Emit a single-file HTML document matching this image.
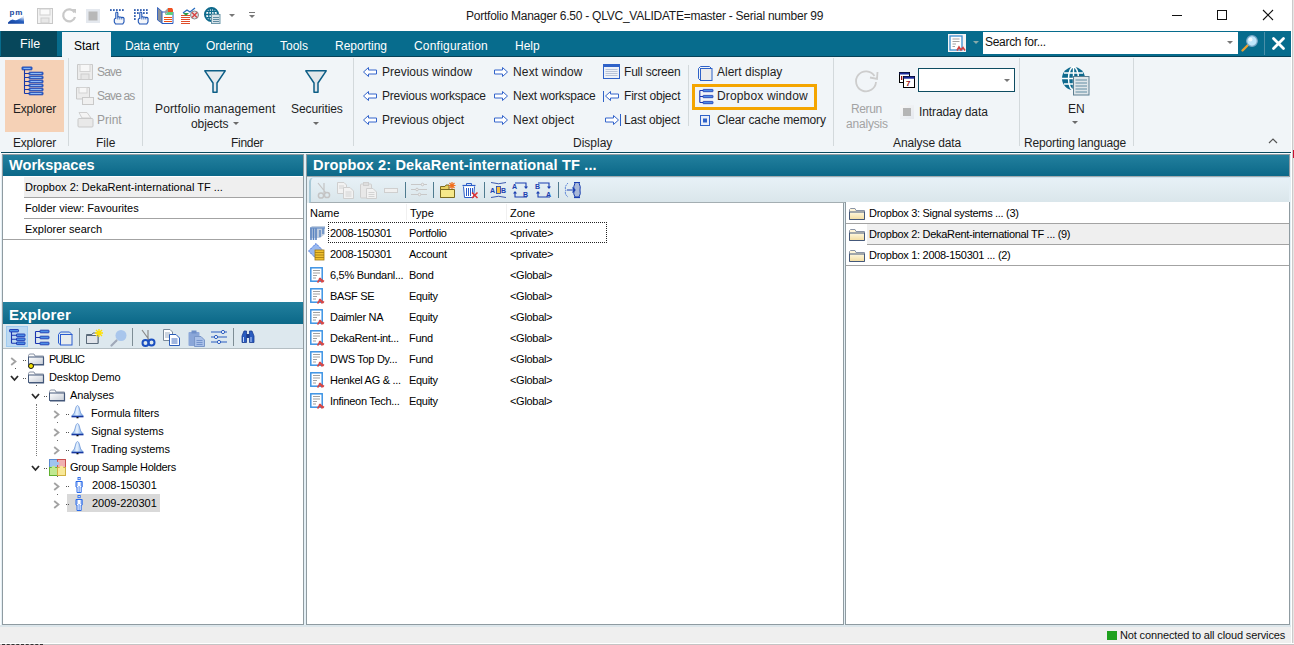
<!DOCTYPE html>
<html><head><meta charset="utf-8">
<style>
*{box-sizing:border-box;margin:0;padding:0}
html,body{width:1294px;height:645px;overflow:hidden;background:#fff;font-family:"Liberation Sans",sans-serif;position:relative}
.a{position:absolute}
svg{position:absolute;overflow:visible}
.t{position:absolute;white-space:nowrap;font-size:12px;color:#1e1e1e;line-height:12px}
.w{color:#fff}
.g{color:#9a9a9a}
.sep{position:absolute;width:1px;background:#d3d9dc}
.hdr{position:absolute;height:21px;background:linear-gradient(#23809e,#0b6888);}
.ht{position:absolute;white-space:nowrap;font-weight:bold;font-size:14.6px;line-height:15px;color:#fff}
.lt{position:absolute;white-space:nowrap;font-size:11px;color:#000;line-height:11px}
.arr{position:absolute;width:0;height:0;border-left:3px solid transparent;border-right:3px solid transparent;border-top:3px solid #6b6b6b}
</style></head><body>
<!-- ===== Title bar ===== -->
<div class="t" style="left:466px;top:10px;letter-spacing:-0.24px;color:#1a1a1a">Portfolio Manager 6.50 - QLVC_VALIDATE=master - Serial number 99</div>
<!-- quick access icons -->
<svg style="left:8px;top:8px" width="17" height="16" viewBox="0 0 17 16">
 <defs><linearGradient id="pmg" x1="0" y1="1" x2="0.6" y2="0"><stop offset="0" stop-color="#0e3c9a"/><stop offset="0.6" stop-color="#2a62c0"/><stop offset="1" stop-color="#dfe8f8"/></linearGradient></defs>
 <text x="1.5" y="6.8" font-family="Liberation Sans" font-weight="bold" font-size="8" letter-spacing="0.8" fill="#1a4aa0">pm</text>
 <path d="M0 15.8 V14.5 Q2 12 4.5 11.5 Q7 12.5 9 12 Q12 11 16 7.5 V15.8 Z" fill="url(#pmg)"/>
</svg>
<svg style="left:37px;top:8px" width="16" height="16" viewBox="0 0 16 16">
 <rect x="0.5" y="0.5" width="15" height="15" fill="#f2f2f2" stroke="#c8c8c8"/>
 <rect x="3" y="1" width="10" height="6" fill="#fafafa" stroke="#d0d0d0"/>
 <rect x="4" y="10" width="8" height="5" fill="#e8e8e8" stroke="#cfcfcf"/>
</svg>
<svg style="left:62px;top:8px" width="15" height="15" viewBox="0 0 15 15">
 <path d="M12.5 4.5 A6 6 0 1 0 13 9" fill="none" stroke="#c9c9c9" stroke-width="2.2"/>
 <path d="M9.5 1 L14 1 L14 5.5 Z" fill="#c9c9c9"/>
</svg>
<svg style="left:86px;top:9px" width="14" height="14" viewBox="0 0 14 14">
 <rect x="0" y="0" width="14" height="14" fill="#e4e8ee"/>
 <rect x="2.5" y="2.5" width="9" height="9" fill="#b8b8b8"/>
</svg>
<svg style="left:110px;top:8px" width="16" height="17" viewBox="0 0 16 17">
 <g fill="#1d4fa8"><rect x="0" y="1.2" width="1.7" height="1.7"/><rect x="3" y="1.2" width="1.7" height="1.7"/><rect x="6" y="1.2" width="1.7" height="1.7"/><rect x="9" y="1.2" width="1.7" height="1.7"/><rect x="12" y="1.2" width="1.7" height="1.7"/></g>
 <path d="M5.5 16 L4.3 14 V11.5 Q4.3 10.5 5.3 10.5 H5.8 V5 Q5.8 4 6.8 4 Q7.8 4 7.8 5 V9 Q9 8.3 9.8 9.2 Q11 8.6 11.8 9.6 Q13.3 9 14 10.3 V14 L12.8 16 Z" fill="#f4f6fa" stroke="#1f55b5" stroke-width="1.1" stroke-linejoin="round"/>
 <path d="M7.8 9 V11.5 M9.8 9.2 V11.5 M11.8 9.6 V11.5" stroke="#1f55b5" stroke-width="0.8"/>
</svg>
<svg style="left:134px;top:8px" width="16" height="17" viewBox="0 0 16 17">
 <g fill="#1d4fa8"><rect x="0" y="1.2" width="1.7" height="1.7"/><rect x="3" y="1.2" width="1.7" height="1.7"/><rect x="6" y="1.2" width="1.7" height="1.7"/><rect x="9" y="1.2" width="1.7" height="1.7"/><rect x="12" y="1.2" width="1.7" height="1.7"/>
 <rect x="0" y="4.2" width="1.7" height="1.7"/><rect x="3" y="4.2" width="1.7" height="1.7"/><rect x="9" y="4.2" width="1.7" height="1.7"/><rect x="12" y="4.2" width="1.7" height="1.7"/><rect x="0" y="7.2" width="1.7" height="1.7"/><rect x="0" y="10.2" width="1.7" height="1.7"/></g>
 <path d="M5.5 16 L4.3 14 V11.5 Q4.3 10.5 5.3 10.5 H5.8 V5 Q5.8 4 6.8 4 Q7.8 4 7.8 5 V9 Q9 8.3 9.8 9.2 Q11 8.6 11.8 9.6 Q13.3 9 14 10.3 V14 L12.8 16 Z" fill="#f4f6fa" stroke="#1f55b5" stroke-width="1.1" stroke-linejoin="round"/>
 <path d="M7.8 9 V11.5 M9.8 9.2 V11.5 M11.8 9.6 V11.5" stroke="#1f55b5" stroke-width="0.8"/>
</svg>
<svg style="left:157px;top:7px" width="17" height="17" viewBox="0 0 17 17">
 <path d="M0.5 0.5 L5.5 5 V16.5 L0.5 13 Z" fill="#8a9098" stroke="#2a5cc0" stroke-width="0.9"/>
 <path d="M5 5 H16 V16.5 H5 Z" fill="#fff" stroke="#2a5cc0" stroke-width="1"/>
 <path d="M11 5 L8 7.5 V4 L11 1 Z" fill="#9aa0a0"/>
 <path d="M11 1 H15 L16 2.5 V5 H11 Z" fill="#f05020"/>
 <path d="M8 8 L11 5 H16 V8 Z" fill="#60d080"/>
 <path d="M7 10.5 H15 M7 12.5 H15 M7 14.5 H15" stroke="#ee5010" stroke-width="1"/>
</svg>
<svg style="left:181px;top:7px" width="18" height="17" viewBox="0 0 18 17">
 <path d="M2 6 L6 3 L9 5 L14 1" fill="none" stroke="#2a6fc0" stroke-width="1.3"/>
 <path d="M0 8.5 H9 M0 10.5 H9 M0 12.5 H9 M0 14.5 H9 M0 16.5 H9" stroke="#e04d2a" stroke-width="1"/>
 <path d="M2 6 L5 9 L8 6" fill="#2f9e48"/>
 <circle cx="13.5" cy="8" r="4" fill="#e0e0e0" stroke="#888"/>
 <path d="M11 5.5 L16 10.5 M16 5.5 L11 10.5" stroke="#d84040" stroke-width="1.3"/>
</svg>
<svg style="left:204px;top:7px" width="17" height="17" viewBox="0 0 17 17">
 <circle cx="7.5" cy="7.5" r="6.5" fill="none" stroke="#0f6a8c" stroke-width="2"/>
 <path d="M1 7.5 H14 M7.5 1 V14 M2.5 4.3 H12.5 M2.5 10.7 H12.5" stroke="#0f6a8c" stroke-width="1.3"/>
 <ellipse cx="7.5" cy="7.5" rx="2.8" ry="6.5" fill="none" stroke="#0f6a8c" stroke-width="1.3"/>
 <rect x="7.5" y="7.5" width="8.5" height="9" fill="#d6e2e8" stroke="#6d97aa"/>
 <path d="M9 10.5 H15 M9 12.5 H15 M9 14.5 H15" stroke="#5e8aa0" stroke-width="1"/>
</svg>
<div class="arr" style="left:229px;top:14px;border-top-color:#777"></div>
<div class="a" style="left:249px;top:12px;width:6px;height:1px;background:#777"></div>
<div class="arr" style="left:249px;top:15px;border-top-color:#777"></div>
<!-- window controls -->
<div class="a" style="left:1172px;top:15px;width:10px;height:1px;background:#111"></div>
<div class="a" style="left:1217px;top:10px;width:10px;height:10px;border:1px solid #111"></div>
<svg style="left:1263px;top:10px" width="10" height="10" viewBox="0 0 10 10"><path d="M0 0 L10 10 M10 0 L0 10" stroke="#111" stroke-width="1.1"/></svg>
<div class="a" style="left:1292px;top:0;width:1px;height:645px;background:#cbcbcb"></div>
<div class="a" style="left:1293px;top:0;width:1px;height:645px;background:#e6e6e6"></div>
<div class="a" style="left:1293px;top:150px;width:1px;height:8px;background:#c8102e"></div>

<!-- ===== Menu bar ===== -->
<div class="a" style="left:0;top:31px;width:1291px;height:26px;background:#076c8d;border-bottom:1px solid #064258"></div>
<div class="a" style="left:1px;top:31px;width:56px;height:26px;background:#07475b"></div>
<div class="a" style="left:62px;top:32px;width:49px;height:25px;background:#f1f5f8"></div>
<div class="t w" style="left:20px;top:38px;font-size:12.5px">File</div>
<div class="t" style="left:74px;top:40px;font-size:12px;color:#000">Start</div>
<div class="t w" style="left:125px;top:40px;letter-spacing:-0.15px">Data entry</div>
<div class="t w" style="left:206px;top:40px">Ordering</div>
<div class="t w" style="left:280px;top:40px">Tools</div>
<div class="t w" style="left:335px;top:40px">Reporting</div>
<div class="t w" style="left:414px;top:40px;letter-spacing:0.2px">Configuration</div>
<div class="t w" style="left:515px;top:40px">Help</div>
<!-- search -->
<svg style="left:948px;top:34px" width="18" height="18" viewBox="0 0 18 18">
 <rect x="0" y="0" width="18" height="18" fill="#f4f4f4"/>
 <rect x="2" y="2" width="12" height="14" fill="#fff" stroke="#3d8fd0" stroke-width="1.3"/>
 <path d="M4.5 5 H11.5 M4.5 7.5 H11.5 M4.5 10 H8 M4.5 12.5 H7" stroke="#999" stroke-width="0.9"/>
 <path d="M9 16.5 L11 13 L13 16 L15 13.5 L17 16.5" fill="none" stroke="#d04040" stroke-width="1.6"/>
</svg>
<div class="arr" style="left:973px;top:41px;border-top-color:#8aa"></div>
<div class="a" style="left:983px;top:32px;width:255px;height:22px;background:#fff"></div>
<div class="t" style="left:985px;top:36px;letter-spacing:-0.3px;color:#111">Search for...</div>
<div class="arr" style="left:1227px;top:41px;border-top-color:#777"></div>
<svg style="left:1241px;top:34px" width="18" height="18" viewBox="0 0 18 18">
 <path d="M1.5 16.5 L7 11" stroke="#e8a030" stroke-width="2.4" stroke-linecap="round"/>
 <circle cx="11" cy="7" r="5.3" fill="#bfe6fb" stroke="#7aa8c8" stroke-width="1.2"/>
 <circle cx="9.5" cy="5.5" r="2" fill="#fff" opacity="0.8"/>
</svg>
<div class="a" style="left:1264px;top:32px;width:1px;height:23px;background:#4a8fa8"></div>
<svg style="left:1272px;top:37px" width="13" height="13" viewBox="0 0 13 13"><path d="M1.5 1.5 L11.5 11.5 M11.5 1.5 L1.5 11.5" stroke="#fff" stroke-width="2.8" stroke-linecap="round"/></svg>
<!-- ===== Ribbon ===== -->
<div class="a" style="left:0;top:57px;width:1291px;height:95px;background:#f1f5f8"></div>
<div class="a" style="left:1px;top:152px;width:1290px;height:1px;background:#0a4a5e"></div>
<!-- Explorer group -->
<div class="a" style="left:5px;top:60px;width:59px;height:72px;background:#f5d1b6"></div>
<svg style="left:21px;top:66px" width="24" height="30" viewBox="0 0 24 30">
 <path d="M3.5 3 V27.5 M3.5 7.5 H8 M3.5 11.5 H8 M3.5 15.5 H8 M3.5 19.5 H8 M3.5 23.5 H8 M3.5 27.5 H8" stroke="#1838a8" stroke-width="1.1" fill="none"/>
 <g fill="#2f6fd8" stroke="#1a3fb0" stroke-width="0.9">
 <rect x="1" y="1" width="10" height="2.8" rx="0.5"/>
 <rect x="8" y="6.2" width="14" height="2.6" rx="0.5"/>
 <rect x="8" y="10.2" width="14" height="2.6" rx="0.5"/>
 <rect x="8" y="14.2" width="14" height="2.6" rx="0.5"/>
 <rect x="8" y="18.2" width="14" height="2.6" rx="0.5"/>
 <rect x="8" y="22.2" width="14" height="2.6" rx="0.5"/>
 <rect x="8" y="26.2" width="14" height="2.6" rx="0.5"/>
 </g>
 <path d="M2.5 2.4 H9.5 M9.5 7.5 H20.5 M9.5 11.5 H20.5 M9.5 15.5 H20.5 M9.5 19.5 H20.5 M9.5 23.5 H20.5 M9.5 27.5 H20.5" stroke="#a8d0ff" stroke-width="0.8"/>
</svg>
<div class="t" style="left:13px;top:103px;letter-spacing:-0.2px">Explorer</div>
<div class="t" style="left:13px;top:137px;letter-spacing:-0.2px">Explorer</div>
<div class="sep" style="left:68px;top:58px;height:88px"></div>
<!-- File group -->
<svg style="left:77px;top:64px" width="16" height="16" viewBox="0 0 16 16">
 <path d="M0.5 0.5 H15.5 V15.5 H0.5 Z" fill="#ececec" stroke="#c9c9c9"/>
 <rect x="3" y="0.5" width="10" height="7" fill="#f7f7f7" stroke="#d3d3d3"/>
 <rect x="4" y="10" width="8" height="5.5" fill="#e6e6e6" stroke="#cdcdcd"/>
</svg>
<div class="t g" style="left:97px;top:66px;letter-spacing:-0.8px">Save</div>
<svg style="left:76px;top:87px" width="18" height="18" viewBox="0 0 18 18">
 <path d="M0.5 0.5 H13.5 V12 H0.5 Z" fill="#ececec" stroke="#c9c9c9"/>
 <rect x="3" y="0.5" width="8" height="5.5" fill="#f7f7f7" stroke="#d3d3d3"/>
 <rect x="6.5" y="10.5" width="11" height="7" fill="#f0f0f0" stroke="#c9c9c9"/>
</svg>
<div class="t g" style="left:97px;top:90px;letter-spacing:-0.85px">Save as</div>
<svg style="left:77px;top:112px" width="17" height="16" viewBox="0 0 17 16">
 <path d="M2 0.5 L10 0.5 L14 6 H5 Z" fill="#f4f4f4" stroke="#cfcfcf"/>
 <rect x="1" y="6.5" width="15" height="8.5" rx="1" fill="#e9e9e9" stroke="#c9c9c9"/>
</svg>
<div class="t g" style="left:97px;top:114px">Print</div>
<div class="t" style="left:96px;top:137px">File</div>
<div class="sep" style="left:142px;top:58px;height:88px"></div>
<!-- Finder group -->
<svg style="left:204px;top:70px" width="22" height="23" viewBox="0 0 22 23">
 <path d="M0.8 0.8 H21.2 L13 13 V22.2 H9 V13 Z" fill="#e6eaee" stroke="#0d5e86" stroke-width="1.5" stroke-linejoin="round"/>
</svg>
<svg style="left:305px;top:70px" width="22" height="23" viewBox="0 0 22 23">
 <path d="M0.8 0.8 H21.2 L13 13 V22.2 H9 V13 Z" fill="#e2e6ea" stroke="#0d5e86" stroke-width="1.5" stroke-linejoin="round"/>
</svg>
<div class="t" style="left:155px;top:103px;letter-spacing:0.15px">Portfolio management</div>
<div class="t" style="left:191px;top:118px;letter-spacing:-0.1px">objects</div>
<div class="arr" style="left:233px;top:122px"></div>
<div class="t" style="left:291px;top:103px;letter-spacing:-0.1px">Securities</div>
<div class="arr" style="left:313px;top:122px"></div>
<div class="t" style="left:231px;top:137px;letter-spacing:-0.3px">Finder</div>
<div class="sep" style="left:353px;top:58px;height:88px"></div>
<!-- Display group -->
<svg style="left:0;top:0" width="1" height="1">
 <defs>
  <path id="la" d="M0.5 5 L5.5 0.5 V3 H13.5 V7 H5.5 V9.5 Z" fill="#fff" stroke="#3465cc" stroke-width="1"/>
  <path id="ra" d="M13.5 5 L8.5 0.5 V3 H0.5 V7 H8.5 V9.5 Z" fill="#fff" stroke="#3465cc" stroke-width="1"/>
 </defs>
</svg>
<svg style="left:363px;top:67px" width="14" height="10"><use href="#la"/></svg>
<svg style="left:363px;top:91px" width="14" height="10"><use href="#la"/></svg>
<svg style="left:363px;top:115px" width="14" height="10"><use href="#la"/></svg>
<div class="t" style="left:382px;top:66px">Previous window</div>
<div class="t" style="left:382px;top:90px;letter-spacing:-0.2px">Previous workspace</div>
<div class="t" style="left:382px;top:114px">Previous object</div>
<svg style="left:494px;top:67px" width="14" height="10"><use href="#ra"/></svg>
<svg style="left:494px;top:91px" width="14" height="10"><use href="#ra"/></svg>
<svg style="left:494px;top:115px" width="14" height="10"><use href="#ra"/></svg>
<div class="t" style="left:513px;top:66px;letter-spacing:0.15px">Next window</div>
<div class="t" style="left:513px;top:90px;letter-spacing:-0.2px">Next workspace</div>
<div class="t" style="left:513px;top:114px;letter-spacing:0.1px">Next object</div>
<svg style="left:603px;top:64px" width="17" height="15" viewBox="0 0 17 15">
 <rect x="0.5" y="0.5" width="16" height="14" fill="#eef2f8" stroke="#2f62c8"/>
 <rect x="0.5" y="0.5" width="16" height="2.5" fill="#2f62c8"/>
 <path d="M2.5 5.5 H14.5 M2.5 7.5 H14.5 M2.5 9.5 H14.5 M2.5 11.5 H14.5" stroke="#b9c4d8" stroke-width="1"/>
</svg>
<svg style="left:603px;top:91px" width="16" height="11" viewBox="0 0 16 11">
 <path d="M0.5 0 V11" stroke="#2f62c8" stroke-width="1"/>
 <path d="M2.5 5 L7.5 0.5 V3 H15.5 V7 H7.5 V9.5 Z" fill="#fff" stroke="#3465cc" stroke-width="1"/>
</svg>
<svg style="left:605px;top:114px" width="16" height="12" viewBox="0 0 16 12">
 <path d="M15.5 0 V12" stroke="#2f62c8" stroke-width="1"/>
 <path d="M13.5 6 L8.5 1.5 V4 H0.5 V8 H8.5 V10.5 Z" fill="#fff" stroke="#3465cc" stroke-width="1"/>
</svg>
<div class="t" style="left:624px;top:66px;letter-spacing:-0.2px">Full screen</div>
<div class="t" style="left:624px;top:90px;letter-spacing:-0.2px">First object</div>
<div class="t" style="left:624px;top:114px;letter-spacing:-0.2px">Last object</div>
<div class="sep" style="left:688px;top:65px;height:61px"></div>
<svg style="left:698px;top:66px" width="15" height="15" viewBox="0 0 15 15">
 <path d="M0.5 2.5 L2.5 0.5 H11.5 L13.5 2.5" fill="none" stroke="#2f62c8"/>
 <rect x="2.5" y="2.5" width="11.5" height="12" fill="#ececec" stroke="#2f62c8"/>
 <path d="M0.5 2.5 V12.5 L2.5 14.5" fill="none" stroke="#2f62c8"/>
</svg>
<div class="a" style="left:692px;top:84px;width:125px;height:26px;border:3px solid #f4a500"></div>
<svg style="left:699px;top:89px" width="15" height="16" viewBox="0 0 15 16">
 <path d="M0.8 1.5 V13.5 M0.8 1.5 H4 M0.8 7.5 H4 M0.8 13.5 H4" stroke="#1a35b0" stroke-width="1.1" fill="none"/>
 <g fill="#4d8ee6" stroke="#1a35b0" stroke-width="0.8"><rect x="4" y="0.4" width="10" height="2.3" rx="0.5"/><rect x="4" y="6.4" width="10" height="2.3" rx="0.5"/><rect x="4" y="12.4" width="10" height="2.3" rx="0.5"/></g>
</svg>
<svg style="left:700px;top:115px" width="10" height="11" viewBox="0 0 10 11">
 <rect x="0.5" y="0.5" width="9" height="10" fill="#e9eef8" stroke="#2f62c8"/>
 <rect x="3" y="3.5" width="4" height="4" fill="#2f62c8"/>
</svg>
<div class="t" style="left:717px;top:66px;letter-spacing:0px">Alert display</div>
<div class="t" style="left:717px;top:90px;letter-spacing:0.15px">Dropbox window</div>
<div class="t" style="left:717px;top:114px;letter-spacing:-0.1px">Clear cache memory</div>
<div class="t" style="left:573px;top:137px">Display</div>
<div class="sep" style="left:833px;top:58px;height:88px"></div>
<!-- Analyse data -->
<svg style="left:854px;top:69px" width="25" height="24" viewBox="0 0 25 24">
 <path d="M20.5 7 A10 10 0 1 0 22 13" fill="none" stroke="#cdcdcd" stroke-width="1.8"/>
 <path d="M23.5 3 L23 10 L16 8.5" fill="none" stroke="#cdcdcd" stroke-width="1.8"/>
</svg>
<div class="t g" style="left:851px;top:103px;color:#a3a3a3;letter-spacing:-0.4px">Rerun</div>
<div class="t g" style="left:846px;top:118px;color:#a3a3a3;letter-spacing:-0.2px">analysis</div>
<svg style="left:899px;top:72px" width="16" height="16" viewBox="0 0 16 16">
 <rect x="0.5" y="0.5" width="10" height="10" fill="#fff" stroke="#000"/>
 <rect x="0.5" y="0.5" width="10" height="2" fill="#1a2a9a"/>
 <rect x="4.5" y="4.5" width="11" height="11" fill="#fff" stroke="#000"/>
 <rect x="4.5" y="4.5" width="11" height="2.2" fill="#1a2a9a"/>
 <text x="7" y="14" font-family="Liberation Sans" font-weight="bold" font-size="8" fill="#9a1010">7</text>
 <rect x="2" y="4" width="1.3" height="4" fill="#9a1010"/>
</svg>
<div class="a" style="left:918px;top:68px;width:97px;height:24px;border:1.5px solid #0e4d62;background:#fff"></div>
<div class="arr" style="left:1004px;top:79px;border-top-color:#777"></div>
<div class="a" style="left:900px;top:105px;width:14px;height:14px;background:linear-gradient(135deg,#f8f8f8,#e4e8ee)"></div>
<div class="a" style="left:903px;top:108px;width:8px;height:8px;background:#b5b5b5"></div>
<div class="t" style="left:919px;top:106px;letter-spacing:-0.1px">Intraday data</div>
<div class="t" style="left:893px;top:137px;letter-spacing:-0.1px">Analyse data</div>
<div class="sep" style="left:1019px;top:58px;height:88px"></div>
<!-- Reporting language -->
<svg style="left:1061px;top:66px" width="29" height="30" viewBox="0 0 29 30">
 <circle cx="12.5" cy="12.5" r="11.5" fill="#0f6a8e"/>
 <g stroke="#fff" stroke-width="1.4" fill="none">
 <path d="M1 12.5 H24 M12.5 1 V24 M3 7 H22 M3 18 H22"/>
 <ellipse cx="12.5" cy="12.5" rx="5" ry="11.5"/>
 </g>
 <rect x="12.5" y="10.5" width="15.5" height="18.5" fill="#dfe6ea" stroke="#5d7f91" stroke-width="1"/>
 <path d="M14.5 14 H26 M14.5 17 H26 M14.5 20 H26 M14.5 23 H26 M14.5 26 H26" stroke="#8aaabb" stroke-width="1.4"/>
</svg>
<div class="t" style="left:1068px;top:103px">EN</div>
<div class="arr" style="left:1072px;top:121px"></div>
<div class="t" style="left:1024px;top:137px;letter-spacing:-0.15px">Reporting language</div>
<div class="sep" style="left:1133px;top:58px;height:88px"></div>
<svg style="left:1268px;top:138px" width="10" height="6" viewBox="0 0 10 6"><path d="M1 5 L5 1 L9 5" fill="none" stroke="#555" stroke-width="1.2"/></svg>
<!-- ===== Main area ===== -->
<div class="a" style="left:0;top:153px;width:1291px;height:472px;background:#e4eff5"></div>
<div class="a" style="left:0;top:153px;width:1px;height:474px;background:#fafcfd"></div><div class="a" style="left:1px;top:154px;width:1px;height:473px;background:#e3eef4"></div>
<div class="a" style="left:0;top:153px;width:1291px;height:1px;background:#fafcfd"></div>
<!-- Workspaces panel -->
<div class="a" style="left:2px;top:154px;width:302px;height:149px;background:#fff;border:1px solid #8f9ba1"></div>
<div class="hdr" style="left:3px;top:155px;width:300px"></div>
<div class="ht" style="left:9px;top:158px">Workspaces</div>
<div class="a" style="left:24px;top:177px;width:279px;height:20px;background:#efefef"></div>
<div class="a" style="left:24px;top:197px;width:279px;height:1px;background:#a3a3a3"></div>
<div class="a" style="left:24px;top:218px;width:279px;height:1px;background:#a3a3a3"></div>
<div class="a" style="left:3px;top:239px;width:300px;height:1px;background:#a3a3a3"></div>
<div class="lt" style="left:25px;top:182px">Dropbox 2: DekaRent-international TF ...</div>
<div class="lt" style="left:25px;top:203px">Folder view: Favourites</div>
<div class="lt" style="left:25px;top:224px">Explorer search</div>
<!-- Explorer panel -->
<div class="a" style="left:2px;top:302px;width:302px;height:323px;background:#fff;border:1px solid #8f9ba1"></div>
<div class="hdr" style="left:3px;top:302px;width:300px;height:22px"></div>
<div class="ht" style="left:9px;top:307px;font-size:15px;letter-spacing:0.15px">Explorer</div>
<div class="a" style="left:3px;top:324px;width:300px;height:25px;background:#dde8ee;border-bottom:1px solid #b4bec3"></div>
<div class="a" style="left:6px;top:326px;width:22px;height:21px;background:#bcd9f2;border:1px solid #9fcbf0"></div>
<svg style="left:9px;top:329px" width="17" height="16" viewBox="0 0 17 16">
 <path d="M2.5 2.5 V14.3 M2.5 6.3 H8 M2.5 10.3 H8 M2.5 14.3 H8" stroke="#1a35b0" stroke-width="1.1" fill="none"/>
 <g fill="#4d8ee6" stroke="#1a35b0" stroke-width="0.9"><rect x="0.5" y="0.5" width="9" height="2.4" rx="0.6"/><rect x="7.5" y="5" width="8.5" height="2.6" rx="0.6"/><rect x="7.5" y="9" width="8.5" height="2.6" rx="0.6"/><rect x="7.5" y="13" width="8.5" height="2.6" rx="0.6"/></g>
</svg>
<svg style="left:34px;top:329px" width="17" height="16" viewBox="0 0 17 16">
 <path d="M1.5 2.5 V14.5 M1.5 2.5 H6 M1.5 8.5 H6 M1.5 14.5 H6" stroke="#1a35b0" stroke-width="1.1" fill="none"/>
 <g fill="#4d8ee6" stroke="#1a35b0" stroke-width="0.9"><rect x="6" y="1.2" width="9" height="2.6" rx="0.6"/><rect x="6" y="7.2" width="9" height="2.6" rx="0.6"/><rect x="6" y="13.2" width="9" height="2.6" rx="0.6"/></g>
</svg>
<svg style="left:58px;top:331px" width="15" height="15" viewBox="0 0 15 15">
 <path d="M0.5 3.5 L2.5 1 H11.5 L14 3.5" fill="none" stroke="#2a5cd0" stroke-width="1"/>
 <rect x="2.5" y="3.5" width="11.5" height="10.5" fill="#e8ecee" stroke="#2a5cd0"/>
 <path d="M0.5 3.5 V12 L2.5 14" fill="none" stroke="#2a5cd0"/>
</svg>
<div class="a" style="left:79px;top:328px;width:1px;height:18px;background:#7d8d95"></div>
<svg style="left:86px;top:329px" width="18" height="16" viewBox="0 0 18 16">
 <path d="M0.5 5.5 H6 L7 4 H12 V14.5 H0.5 Z" fill="#f4f4f4" stroke="#5a6a7a"/>
 <path d="M0.5 6.5 H12 V14.5 H0.5 Z" fill="#e0e4ea" stroke="#5a6a7a"/>
 <path d="M13 0 V8 M9 4 H17 M10 1 L16 7 M16 1 L10 7" stroke="#ffe000" stroke-width="1.3"/>
</svg>
<svg style="left:110px;top:329px" width="18" height="18" viewBox="0 0 18 18">
 <path d="M1.5 16.5 L6.5 11.5" stroke="#a0a8b8" stroke-width="2.2" stroke-linecap="round"/>
 <circle cx="11" cy="6.5" r="5.5" fill="#a9c6ec"/>
</svg>
<div class="a" style="left:132px;top:328px;width:1px;height:18px;background:#7d8d95"></div>
<svg style="left:141px;top:329px" width="14" height="18" viewBox="0 0 14 18">
 <path d="M1 1 L9 12 M7 1 L7 12" stroke="#8a8a8a" stroke-width="1.2"/>
 <circle cx="4.5" cy="14" r="3" fill="none" stroke="#1a4fc0" stroke-width="2"/>
 <circle cx="10.5" cy="13.5" r="3" fill="none" stroke="#1a4fc0" stroke-width="2"/>
</svg>
<svg style="left:163px;top:329px" width="17" height="17" viewBox="0 0 17 17">
 <path d="M0.5 0.5 H7 L9.5 3 V11.5 H0.5 Z" fill="#fff" stroke="#7a8a9a"/>
 <path d="M2 4 H7 M2 6 H7 M2 8 H7" stroke="#8fa0b8" stroke-width="0.9"/>
 <path d="M6.5 5.5 H13 L16.5 9 V16.5 H6.5 Z" fill="#fff" stroke="#2a5cb8"/>
 <path d="M8.5 10 H14.5 M8.5 12 H14.5 M8.5 14 H14.5" stroke="#2a5cb8" stroke-width="0.9"/>
</svg>
<svg style="left:188px;top:330px" width="17" height="17" viewBox="0 0 17 17">
 <rect x="0.5" y="2" width="11" height="14" rx="1" fill="#8aa6d8"/>
 <rect x="3.5" y="0.5" width="5" height="3" fill="#6f8fc8"/>
 <path d="M6.5 6.5 H13 L16.5 10 V16.5 H6.5 Z" fill="#a9c0e8" stroke="#7a97c8"/>
 <path d="M8.5 10.5 H14.5 M8.5 12.5 H14.5 M8.5 14.5 H14.5" stroke="#6f8fc8" stroke-width="0.9"/>
</svg>
<svg style="left:211px;top:330px" width="17" height="14" viewBox="0 0 17 14">
 <path d="M0 2 H16 M0 7 H16 M0 12 H16" stroke="#2a5cc0" stroke-width="1.1"/>
 <g fill="#fff" stroke="#2a5cc0"><circle cx="12" cy="2" r="1.6"/><circle cx="5" cy="7" r="1.6"/><circle cx="8" cy="12" r="1.6"/></g>
</svg>
<div class="a" style="left:233px;top:328px;width:1px;height:18px;background:#7d8d95"></div>
<svg style="left:241px;top:330px" width="14" height="13" viewBox="0 0 14 13">
 <path d="M1 12.5 V6 L3 1 H5.5 V12.5 Z M8.5 12.5 V1 H11 L13 6 V12.5 Z" fill="#2a5cc0" stroke="#1a3c90" stroke-width="0.8"/>
 <rect x="5.5" y="4" width="3" height="4" fill="#1a3c90"/>
 <path d="M2.5 7 V12 M10 7 V12" stroke="#cfe0ff" stroke-width="0.9"/>
</svg>
<!-- tree -->
<div class="a" style="left:57px;top:404px;width:1px;height:1px;background:#666"></div>
<div class="a" style="left:57px;top:422px;width:1px;height:1px;background:#666"></div>
<div class="a" style="left:57px;top:440px;width:1px;height:1px;background:#666"></div>
<div class="a" style="left:57px;top:476px;width:1px;height:1px;background:#666"></div>
<div class="a" style="left:57px;top:494px;width:1px;height:1px;background:#666"></div>

<svg style="left:0;top:0" width="1" height="1"><defs>
 <g id="fold"><path d="M0.5 2.5 V11.5 H15.5 V3 H7 L6 1 H1.5 Z" fill="#fbfbfb" stroke="#8a94a6"/><path d="M0.5 4 H15.5 V11.5 H0.5 Z" fill="url(#fg)" stroke="#44587a"/><path d="M1 12 H15.5 V4.5" stroke="#44587a" stroke-width="1.2" fill="none"/></g>
 <linearGradient id="fg" x1="0" y1="0" x2="1" y2="1"><stop offset="0" stop-color="#ffffff"/><stop offset="1" stop-color="#c6ccd6"/></linearGradient>
 <g id="bell"><linearGradient id="bg1" x1="0" y1="0" x2="1" y2="0"><stop offset="0" stop-color="#7eaeea"/><stop offset="0.45" stop-color="#eaf4ff"/><stop offset="1" stop-color="#6f9fe0"/></linearGradient><path d="M6.5 0.5 Q5 0.8 4.5 4 Q4 8.5 0.8 11 H12.2 Q9 8.5 8.5 4 Q8 0.8 6.5 0.5 Z" fill="url(#bg1)" stroke="#6b95d8" stroke-width="0.8"/><path d="M0.5 11.6 H12.5" stroke="#1838a0" stroke-width="1.5"/><rect x="5.5" y="12" width="2" height="1.3" fill="#111"/></g>
 <g id="exp"><path d="M1.2 1 L5.5 4.5 L1.2 8" fill="none" stroke="#a2a2a2" stroke-width="1.8"/></g>
 <g id="col"><path d="M1 1 L4.5 5 L8 1" fill="none" stroke="#2a2a2a" stroke-width="1.8"/></g>
 <g id="man"><rect x="3" y="0.5" width="2.2" height="2.2" fill="#fff" stroke="#2a6ae8" stroke-width="0.9"/><path d="M1 4.5 H7.2 V10 H6.2 V15.5 H2 V10 H1 Z" fill="#fff" stroke="#2a6ae8" stroke-width="1"/><path d="M4.1 9 V15.5 M2 4.5 V9 M6.2 4.5 V9" stroke="#2a6ae8" stroke-width="0.8"/></g>
</defs></svg>
<svg style="left:10px;top:357px" width="8" height="9"><use href="#exp"/></svg>
<div class="a" style="left:23px;top:360px;width:1px;height:1px;background:#555"></div><div class="a" style="left:25px;top:360px;width:1px;height:1px;background:#555"></div>
<svg style="left:28px;top:353px" width="16" height="13"><use href="#fold"/></svg>
<div class="a" style="left:28px;top:363px;width:6px;height:6px;border-radius:50%;background:#f2e000;border:1.6px solid #111"></div>
<div class="a" style="left:15px;top:368px;width:1px;height:1px;background:#555"></div>
<div class="lt" style="left:49px;top:354px;letter-spacing:-0.75px">PUBLIC</div>
<svg style="left:10px;top:375px" width="9" height="6"><use href="#col"/></svg>
<div class="a" style="left:23px;top:378px;width:1px;height:1px;background:#555"></div><div class="a" style="left:25px;top:378px;width:1px;height:1px;background:#555"></div>
<svg style="left:28px;top:371px" width="16" height="13"><use href="#fold"/></svg>
<div class="lt" style="left:49px;top:372px;letter-spacing:-0.1px">Desktop Demo</div>
<div class="a" style="left:36px;top:385px;width:1px;height:1px;background:#555"></div>
<div class="a" style="left:36px;top:404px;width:1px;height:52px;border-left:1px dotted #777"></div>
<svg style="left:31px;top:393px" width="9" height="6"><use href="#col"/></svg>
<div class="a" style="left:44px;top:396px;width:1px;height:1px;background:#555"></div><div class="a" style="left:46px;top:396px;width:1px;height:1px;background:#555"></div>
<svg style="left:49px;top:389px" width="16" height="13"><use href="#fold"/></svg>
<div class="lt" style="left:70px;top:390px;letter-spacing:-0.1px">Analyses</div>

<svg style="left:53px;top:410px" width="8" height="9"><use href="#exp"/></svg>
<div class="a" style="left:66px;top:414px;width:1px;height:1px;background:#555"></div><div class="a" style="left:68px;top:414px;width:1px;height:1px;background:#555"></div>
<svg style="left:71px;top:405px" width="13" height="13"><use href="#bell"/></svg>
<div class="lt" style="left:91px;top:408px;letter-spacing:-0.1px">Formula filters</div>
<svg style="left:53px;top:428px" width="8" height="9"><use href="#exp"/></svg>
<div class="a" style="left:66px;top:432px;width:1px;height:1px;background:#555"></div><div class="a" style="left:68px;top:432px;width:1px;height:1px;background:#555"></div>
<svg style="left:71px;top:423px" width="13" height="13"><use href="#bell"/></svg>
<div class="lt" style="left:91px;top:426px;letter-spacing:-0.1px">Signal systems</div>
<svg style="left:53px;top:446px" width="8" height="9"><use href="#exp"/></svg>
<div class="a" style="left:66px;top:450px;width:1px;height:1px;background:#555"></div><div class="a" style="left:68px;top:450px;width:1px;height:1px;background:#555"></div>
<svg style="left:71px;top:441px" width="13" height="13"><use href="#bell"/></svg>
<div class="lt" style="left:91px;top:444px;letter-spacing:-0.1px">Trading systems</div>
<svg style="left:31px;top:465px" width="9" height="6"><use href="#col"/></svg>
<div class="a" style="left:44px;top:468px;width:1px;height:1px;background:#555"></div><div class="a" style="left:46px;top:468px;width:1px;height:1px;background:#555"></div>
<svg style="left:49px;top:459px" width="17" height="17" viewBox="0 0 17 17">
 <rect x="0.5" y="0.5" width="8" height="8" fill="#9ec4f0" stroke="#5a8ad0"/>
 <rect x="8.5" y="0.5" width="8" height="8" fill="#f0b0b0" stroke="#c85050"/>
 <rect x="0.5" y="8.5" width="8" height="8" fill="#c0e890" stroke="#60b030"/>
 <rect x="8.5" y="8.5" width="8" height="8" fill="#f8e898" stroke="#d0b040"/>
 <circle cx="8.5" cy="4.5" r="1.8" fill="#9ec4f0"/><circle cx="4.5" cy="8.5" r="1.8" fill="#c0e890"/><circle cx="12.5" cy="8.5" r="1.8" fill="#f8e898"/>
</svg>
<div class="lt" style="left:70px;top:462px;letter-spacing:-0.3px">Group Sample Holders</div>
<svg style="left:53px;top:482px" width="8" height="9"><use href="#exp"/></svg>
<div class="a" style="left:66px;top:486px;width:1px;height:1px;background:#555"></div><div class="a" style="left:68px;top:486px;width:1px;height:1px;background:#555"></div>
<svg style="left:75px;top:477px" width="9" height="16"><use href="#man"/></svg>
<div class="lt" style="left:92px;top:480px">2008-150301</div>
<div class="a" style="left:67px;top:494px;width:93px;height:18px;background:#d9d9d9"></div>
<svg style="left:53px;top:500px" width="8" height="9"><use href="#exp"/></svg>
<div class="a" style="left:66px;top:504px;width:1px;height:1px;background:#555"></div><div class="a" style="left:68px;top:504px;width:1px;height:1px;background:#555"></div>
<svg style="left:75px;top:495px" width="9" height="16"><use href="#man"/></svg>
<div class="lt" style="left:92px;top:498px">2009-220301</div>
<!-- Middle panel -->
<div class="a" style="left:306px;top:154px;width:984px;height:23px;background:#fff;border:1px solid #8f9ba1;border-bottom:none"></div>
<div class="hdr" style="left:307px;top:155px;width:982px"></div>
<div class="ht" style="left:313px;top:158px;letter-spacing:0.12px">Dropbox 2: DekaRent-international TF ...</div>
<div class="a" style="left:306px;top:176px;width:538px;height:449px;background:#fff;border:1px solid #8f9ba1;border-top:none"></div>
<div class="a" style="left:307px;top:176px;width:982px;height:27px;background:#e4eef3;border-top:1px solid #a3abaf"></div>
<div class="a" style="left:309px;top:177px;width:980px;height:26px;background:linear-gradient(#e7f1f7,#dae6eb);border-radius:5px 0 0 0;border-top:1px solid #cfe4ef;border-left:2px solid #a9cad8;border-bottom:1px solid #a4aeb2"></div>
<!-- mid toolbar icons -->
<svg style="left:317px;top:182px" width="14" height="17" viewBox="0 0 14 17">
 <path d="M1 1 L9 11 M7 1 L7 11" stroke="#c4c4c4" stroke-width="1.2"/>
 <circle cx="4" cy="13.5" r="2.6" fill="none" stroke="#c4c4c4" stroke-width="1.5"/>
 <circle cx="10" cy="13" r="2.6" fill="none" stroke="#c4c4c4" stroke-width="1.5"/>
</svg>
<svg style="left:337px;top:182px" width="17" height="17" viewBox="0 0 17 17">
 <path d="M0.5 0.5 H7 L9.5 3 V11.5 H0.5 Z" fill="#f2f2f2" stroke="#cfcfcf"/>
 <path d="M6.5 5.5 H13 L16.5 9 V16.5 H6.5 Z" fill="#f2f2f2" stroke="#cfcfcf"/>
 <path d="M8.5 10 H14.5 M8.5 12 H14.5 M8.5 14 H14.5 M2 4 H7 M2 6 H7" stroke="#cfcfcf" stroke-width="0.9"/>
</svg>
<svg style="left:360px;top:182px" width="17" height="17" viewBox="0 0 17 17">
 <rect x="0.5" y="2" width="11" height="14" rx="1" fill="#e8e8e8" stroke="#cfcfcf"/>
 <rect x="3.5" y="0.5" width="5" height="3" fill="#ddd" stroke="#cfcfcf"/>
 <path d="M6.5 6.5 H13 L16.5 10 V16.5 H6.5 Z" fill="#f2f2f2" stroke="#cfcfcf"/>
 <path d="M8.5 10.5 H14.5 M8.5 12.5 H14.5 M8.5 14.5 H14.5" stroke="#cfcfcf" stroke-width="0.9"/>
</svg>
<div class="a" style="left:384px;top:188px;width:14px;height:5px;border:1px solid #cfcfcf;background:#f0f0f0"></div>
<div class="a" style="left:405px;top:182px;width:1px;height:16px;background:#4f7b8f"></div>
<svg style="left:411px;top:183px" width="17" height="13" viewBox="0 0 17 13">
 <path d="M0 1.5 H16 M0 6.5 H16 M0 11.5 H16" stroke="#c8c8c8" stroke-width="1"/>
 <g fill="#eee" stroke="#c8c8c8"><circle cx="11.5" cy="1.5" r="1.3"/><circle cx="6" cy="6.5" r="1.3"/><circle cx="8.5" cy="11.5" r="1.3"/></g>
</svg>
<div class="a" style="left:433px;top:182px;width:1px;height:16px;background:#4f7b8f"></div>
<svg style="left:440px;top:182px" width="16" height="16" viewBox="0 0 16 16">
 <path d="M0.5 4.5 H5 L6 3 H9 V15.5 H0.5 Z" fill="#e8d060" stroke="#7a6a20"/>
 <path d="M0.5 7.5 H14.5 V15.5 H0.5 Z" fill="#f6e88a" stroke="#7a6a20"/>
 <path d="M12 0 V7 M8.5 3.5 H15.5 M9.5 1 L14.5 6 M14.5 1 L9.5 6" stroke="#f07020" stroke-width="1.2"/>
</svg>
<svg style="left:462px;top:182px" width="17" height="17" viewBox="0 0 17 17">
 <path d="M0.5 3.5 H13.5" stroke="#2a5cc8" stroke-width="1.2"/>
 <path d="M4.5 3 V1.5 H9.5 V3" fill="none" stroke="#2a5cc8"/>
 <path d="M1.5 4.5 L2.5 15.5 H11.5 L12.5 4.5" fill="#fff" stroke="#2a5cc8"/>
 <path d="M4.5 6 V14 M6.5 6 V14 M8.5 6 V14 M10.5 6 V12" stroke="#2a5cc8" stroke-width="1"/>
 <path d="M10 10.5 L15.5 16 M15.5 10.5 L10 16" stroke="#e03030" stroke-width="1.5"/>
</svg>
<div class="a" style="left:484px;top:182px;width:1px;height:16px;background:#4f7b8f"></div>
<svg style="left:490px;top:182px" width="17" height="16" viewBox="0 0 17 16">
 <path d="M1 0.5 Q8.5 3 16 0.5 M1 15.5 Q8.5 13 16 15.5" fill="none" stroke="#2a4aa8" stroke-width="0.9"/>
 <text x="0" y="11" font-family="Liberation Sans" font-weight="bold" font-size="7" fill="#1a3fb0">A</text>
 <text x="11" y="11" font-family="Liberation Sans" font-weight="bold" font-size="7" fill="#1a3fb0">B</text>
 <rect x="6.5" y="4.5" width="4" height="7" fill="#f6c040" stroke="#1a3fb0" stroke-width="0.8"/>
</svg>
<svg style="left:512px;top:182px" width="18" height="16" viewBox="0 0 18 16">
 <text x="0" y="7" font-family="Liberation Sans" font-weight="bold" font-size="7" fill="#1a3fb0">A</text>
 <text x="11" y="14.5" font-family="Liberation Sans" font-weight="bold" font-size="7" fill="#1a3fb0">B</text>
 <path d="M3 1 H14 V5" fill="none" stroke="#1a3fb0" stroke-width="1.1"/><path d="M12 4.5 L14 7 L16 4.5 Z" fill="#1a3fb0"/>
 <path d="M15 15 H3 V11" fill="none" stroke="#1a3fb0" stroke-width="1.1"/><path d="M1 11.5 L3 9 L5 11.5 Z" fill="#1a3fb0"/>
</svg>
<svg style="left:535px;top:182px" width="18" height="16" viewBox="0 0 18 16">
 <text x="0" y="7" font-family="Liberation Sans" font-weight="bold" font-size="7" fill="#1a3fb0">B</text>
 <text x="11" y="14.5" font-family="Liberation Sans" font-weight="bold" font-size="7" fill="#1a3fb0">A</text>
 <path d="M3 1 H14 V5" fill="none" stroke="#1a3fb0" stroke-width="1.1"/><path d="M12 4.5 L14 7 L16 4.5 Z" fill="#1a3fb0"/>
 <path d="M15 15 H3 V11" fill="none" stroke="#1a3fb0" stroke-width="1.1"/><path d="M1 11.5 L3 9 L5 11.5 Z" fill="#1a3fb0"/>
</svg>
<div class="a" style="left:558px;top:182px;width:1px;height:16px;background:#4f7b8f"></div>
<svg style="left:564px;top:182px" width="17" height="16" viewBox="0 0 17 16">
 <path d="M4 1 Q0 5 2 8 Q0 12 4 15" fill="none" stroke="#3a6ad0" stroke-width="1" stroke-dasharray="1.5 1"/>
 <path d="M10 0.5 H16 M11 1 Q9 5 10 8 Q9 12 11 15 H15 Q17 12 16 8 Q17 5 15 1" fill="#a8b8d8" stroke="#1a3fb0" stroke-width="1"/>
 <path d="M3 8 H11 M8.5 5.5 L11 8 L8.5 10.5" fill="none" stroke="#1a3fb0" stroke-width="1.2"/>
 <path d="M10 15.5 H16" stroke="#1a3fb0" stroke-width="1.2"/>
</svg>
<!-- columns -->
<div class="lt" style="left:310px;top:208px">Name</div>
<div class="lt" style="left:410px;top:208px">Type</div>
<div class="lt" style="left:510px;top:208px">Zone</div>
<div class="a" style="left:406px;top:204px;width:1px;height:16px;background:#f0f0f0"></div>
<div class="a" style="left:506px;top:204px;width:1px;height:16px;background:#f0f0f0"></div>
<div class="a" style="left:328px;top:222px;width:279px;height:21px;border:1px dotted #222"></div>
<svg style="left:0;top:0" width="1" height="1"><defs>
 <g id="doc"><rect x="0.8" y="0.8" width="11.4" height="13.4" fill="#fff" stroke="#3c93e4" stroke-width="1.5"/><path d="M3 3.5 H10 M3 6 H10 M3 8.5 H7 M3 11 H6" stroke="#a0a0a0" stroke-width="1"/><path d="M7.5 15.5 L10 12 L12.5 15.5 M10 12 L14 14.5" fill="none" stroke="#d54848" stroke-width="1.7"/><circle cx="10" cy="12" r="1.3" fill="#d54848"/></g>
 <g id="dfold"><path d="M0.5 2.5 V12.5 H15.5 V3.5 H7 L6 1.5 H1.5 Z" fill="#fff5d8" stroke="#8a94a6"/><path d="M0.5 5 H15.5 V12.5 H0.5 Z" fill="url(#yg)" stroke="#44587a"/></g>
 <linearGradient id="yg" x1="0" y1="0" x2="0" y2="1"><stop offset="0" stop-color="#fff8e0"/><stop offset="1" stop-color="#f2dca0"/></linearGradient>
</defs></svg>
<svg style="left:309px;top:225px" width="17" height="16" viewBox="0 0 17 16">
 <path d="M1 3 L3 1 H16 V9 L11 13 H1 Z" fill="#c0cee0"/>
 <path d="M2 3 V15 M4.5 3 V15 M7 3 V15" stroke="#5a84c0" stroke-width="1.6"/>
 <path d="M11 5 V12 M14 3 V9" stroke="#5a84c0" stroke-width="1.4"/>
 <path d="M1 3 H16" stroke="#6a90c8" stroke-width="1.3"/>
</svg>
<div class="lt" style="left:330px;top:228px;letter-spacing:-0.3px">2008-150301</div>
<div class="lt" style="left:409px;top:228px;letter-spacing:-0.3px">Portfolio</div>
<div class="lt" style="left:510px;top:228px;letter-spacing:-0.3px">&lt;private&gt;</div>
<svg style="left:308px;top:243px" width="17" height="18" viewBox="0 0 17 18">
 <path d="M8 0.5 L15.5 8 L8 15.5 L0.5 8 Z" fill="#98b8f0" stroke="#3a6ad8" stroke-dasharray="1.5 0.8"/>
 <rect x="7" y="7" width="9" height="10" fill="#f0c030" stroke="#a07810" stroke-width="0.8"/>
 <path d="M7 9.5 H16 M7 12 H16 M7 14.5 H16" stroke="#a07810" stroke-width="0.8"/>
</svg>
<div class="lt" style="left:330px;top:249px;letter-spacing:-0.3px">2008-150301</div>
<div class="lt" style="left:409px;top:249px;letter-spacing:-0.3px">Account</div>
<div class="lt" style="left:510px;top:249px;letter-spacing:-0.3px">&lt;private&gt;</div>
<svg style="left:310px;top:267px" width="15" height="16"><use href="#doc"/></svg>
<div class="lt" style="left:330px;top:270px;letter-spacing:-0.3px">6,5% Bundanl...</div>
<div class="lt" style="left:409px;top:270px;letter-spacing:-0.3px">Bond</div>
<div class="lt" style="left:510px;top:270px;letter-spacing:-0.3px">&lt;Global&gt;</div>
<svg style="left:310px;top:288px" width="15" height="16"><use href="#doc"/></svg>
<div class="lt" style="left:330px;top:291px;letter-spacing:-0.3px">BASF SE</div>
<div class="lt" style="left:409px;top:291px;letter-spacing:-0.3px">Equity</div>
<div class="lt" style="left:510px;top:291px;letter-spacing:-0.3px">&lt;Global&gt;</div>
<svg style="left:310px;top:309px" width="15" height="16"><use href="#doc"/></svg>
<div class="lt" style="left:330px;top:312px;letter-spacing:-0.3px">Daimler NA</div>
<div class="lt" style="left:409px;top:312px;letter-spacing:-0.3px">Equity</div>
<div class="lt" style="left:510px;top:312px;letter-spacing:-0.3px">&lt;Global&gt;</div>
<svg style="left:310px;top:330px" width="15" height="16"><use href="#doc"/></svg>
<div class="lt" style="left:330px;top:333px;letter-spacing:-0.3px">DekaRent-int...</div>
<div class="lt" style="left:409px;top:333px;letter-spacing:-0.3px">Fund</div>
<div class="lt" style="left:510px;top:333px;letter-spacing:-0.3px">&lt;Global&gt;</div>
<svg style="left:310px;top:351px" width="15" height="16"><use href="#doc"/></svg>
<div class="lt" style="left:330px;top:354px;letter-spacing:-0.3px">DWS Top Dy...</div>
<div class="lt" style="left:409px;top:354px;letter-spacing:-0.3px">Fund</div>
<div class="lt" style="left:510px;top:354px;letter-spacing:-0.3px">&lt;Global&gt;</div>
<svg style="left:310px;top:372px" width="15" height="16"><use href="#doc"/></svg>
<div class="lt" style="left:330px;top:375px;letter-spacing:-0.3px">Henkel AG &amp; ...</div>
<div class="lt" style="left:409px;top:375px;letter-spacing:-0.3px">Equity</div>
<div class="lt" style="left:510px;top:375px;letter-spacing:-0.3px">&lt;Global&gt;</div>
<svg style="left:310px;top:393px" width="15" height="16"><use href="#doc"/></svg>
<div class="lt" style="left:330px;top:396px;letter-spacing:-0.3px">Infineon Tech...</div>
<div class="lt" style="left:409px;top:396px;letter-spacing:-0.3px">Equity</div>
<div class="lt" style="left:510px;top:396px;letter-spacing:-0.3px">&lt;Global&gt;</div>
<!-- right dropbox list -->
<div class="a" style="left:845px;top:202px;width:445px;height:423px;background:#fff;border:1px solid #8f9ba1;border-top:none"></div>
<svg style="left:849px;top:207px" width="16" height="14"><use href="#dfold"/></svg>
<div class="lt" style="left:869px;top:208px;letter-spacing:-0.3px">Dropbox 3: Signal systems ... (3)</div>
<div class="a" style="left:846px;top:223px;width:443px;height:1px;background:#a3a3a3"></div>
<div class="a" style="left:867px;top:224px;width:422px;height:20px;background:#efefef"></div>
<svg style="left:849px;top:228px" width="16" height="14"><use href="#dfold"/></svg>
<div class="lt" style="left:869px;top:229px;letter-spacing:-0.3px">Dropbox 2: DekaRent-international TF ... (9)</div>
<div class="a" style="left:867px;top:244px;width:422px;height:1px;background:#a3a3a3"></div>
<svg style="left:849px;top:249px" width="16" height="14"><use href="#dfold"/></svg>
<div class="lt" style="left:869px;top:250px;letter-spacing:-0.3px">Dropbox 1: 2008-150301 ... (2)</div>
<div class="a" style="left:846px;top:265px;width:443px;height:1px;background:#a3a3a3"></div>
<!-- status bar -->
<div class="a" style="left:0;top:625px;width:1291px;height:2px;background:#dce6eb"></div>
<div class="a" style="left:0;top:627px;width:1291px;height:16px;background:#efefef"></div>
<div class="a" style="left:0;top:643px;width:1294px;height:1px;background:#fff"></div>
<div class="a" style="left:0;top:644px;width:1294px;height:1px;background:#c4c4c4"></div>
<div class="a" style="left:2px;top:644px;width:41px;height:1px;border-top:1px dashed #333"></div>
<div class="a" style="left:1107px;top:631px;width:10px;height:9px;background:#1ea01e"></div>
<div class="lt" style="left:1120px;top:630px;letter-spacing:-0.14px;color:#111">Not connected to all cloud services</div>
</body></html>
